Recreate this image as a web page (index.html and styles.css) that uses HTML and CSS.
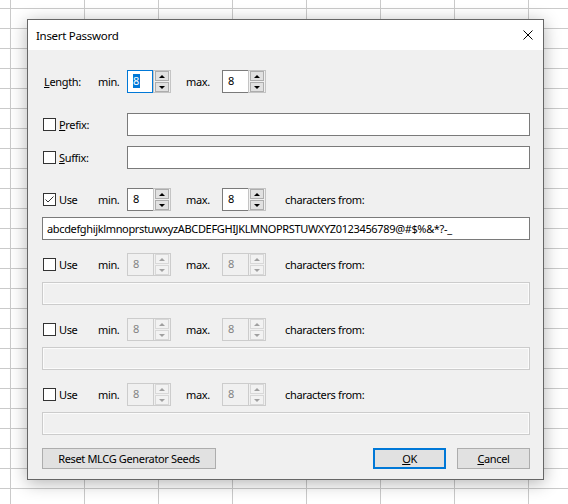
FILE: index.html
```html
<!DOCTYPE html>
<html lang="en">

<head>
  <meta charset="UTF-8">
  <title>Insert Password</title>
  <meta name="viewport" content="width=device-width, initial-scale=1.0">
  <link rel="stylesheet" href="styles.css">
</head>

<body>

  <div class="dialog">
    <div class="titlebar">
      <span class="title">Insert Password</span>
      <svg class="close" width="10" height="10" viewBox="0 0 10 10">
        <path d="M0.5 0.5L9.5 9.5M9.5 0.5L0.5 9.5" stroke="#000" stroke-width="1" fill="none" />
      </svg>
    </div>

    <div class="content">

      <!-- length -->
      <div class="row">
        <div class="lead"><span class="label length-label"><u>L</u>ength:</span></div>
        <span class="tag">min.</span>
        <div class="spin focused">
          <div class="spin-edit"><span class="sel">8</span></div>
          <div class="spin-btns"><span class="arrow-btn"><i class="up"></i></span><span class="arrow-btn"><i class="down"></i></span></div>
        </div>
        <span class="tag tag-max">max.</span>
        <div class="spin">
          <div class="spin-edit">8</div>
          <div class="spin-btns"><span class="arrow-btn"><i class="up"></i></span><span class="arrow-btn"><i class="down"></i></span></div>
        </div>
      </div>

      <!-- prefix / suffix -->
      <div class="affix">
        <div class="row">
          <div class="lead lead-wide"><span class="check"></span><span class="label"><u>P</u>refix:</span></div>
          <div class="field"></div>
        </div>
        <div class="row">
          <div class="lead lead-wide"><span class="check"></span><span class="label"><u>S</u>uffix:</span></div>
          <div class="field"></div>
        </div>
      </div>

      <!-- character sets -->
      <div class="set first">
        <div class="row">
          <div class="lead">
            <span class="check checked">
              <svg width="11" height="11" viewBox="0 0 11 11"><path d="M1.5 5.5L4 8L9.5 2.5" stroke="#333" stroke-width="1" fill="none" /></svg>
            </span>
            <span class="label">Use</span>
          </div>
          <span class="tag">min.</span>
          <div class="spin">
            <div class="spin-edit">8</div>
            <div class="spin-btns"><span class="arrow-btn"><i class="up"></i></span><span class="arrow-btn"><i class="down"></i></span></div>
          </div>
          <span class="tag tag-max">max.</span>
          <div class="spin">
            <div class="spin-edit">8</div>
            <div class="spin-btns"><span class="arrow-btn"><i class="up"></i></span><span class="arrow-btn"><i class="down"></i></span></div>
          </div>
          <span class="from">characters from:</span>
        </div>
        <div class="field">abcdefghijklmnoprstuwxyzABCDEFGHIJKLMNOPRSTUWXYZ0123456789@#$%&amp;*?-_</div>
      </div>

      <div class="set">
        <div class="row">
          <div class="lead"><span class="check"></span><span class="label">Use</span></div>
          <span class="tag">min.</span>
          <div class="spin disabled">
            <div class="spin-edit">8</div>
            <div class="spin-btns"><span class="arrow-btn"><i class="up"></i></span><span class="arrow-btn"><i class="down"></i></span></div>
          </div>
          <span class="tag tag-max">max.</span>
          <div class="spin disabled">
            <div class="spin-edit">8</div>
            <div class="spin-btns"><span class="arrow-btn"><i class="up"></i></span><span class="arrow-btn"><i class="down"></i></span></div>
          </div>
          <span class="from">characters from:</span>
        </div>
        <div class="field disabled"></div>
      </div>

      <div class="set">
        <div class="row">
          <div class="lead"><span class="check"></span><span class="label">Use</span></div>
          <span class="tag">min.</span>
          <div class="spin disabled">
            <div class="spin-edit">8</div>
            <div class="spin-btns"><span class="arrow-btn"><i class="up"></i></span><span class="arrow-btn"><i class="down"></i></span></div>
          </div>
          <span class="tag tag-max">max.</span>
          <div class="spin disabled">
            <div class="spin-edit">8</div>
            <div class="spin-btns"><span class="arrow-btn"><i class="up"></i></span><span class="arrow-btn"><i class="down"></i></span></div>
          </div>
          <span class="from">characters from:</span>
        </div>
        <div class="field disabled"></div>
      </div>

      <div class="set">
        <div class="row">
          <div class="lead"><span class="check"></span><span class="label">Use</span></div>
          <span class="tag">min.</span>
          <div class="spin disabled">
            <div class="spin-edit">8</div>
            <div class="spin-btns"><span class="arrow-btn"><i class="up"></i></span><span class="arrow-btn"><i class="down"></i></span></div>
          </div>
          <span class="tag tag-max">max.</span>
          <div class="spin disabled">
            <div class="spin-edit">8</div>
            <div class="spin-btns"><span class="arrow-btn"><i class="up"></i></span><span class="arrow-btn"><i class="down"></i></span></div>
          </div>
          <span class="from">characters from:</span>
        </div>
        <div class="field disabled"></div>
      </div>

      <!-- buttons -->
      <div class="footer">
        <button class="btn btn-reset">Reset MLCG Generator Seeds</button>
        <button class="btn btn-ok"><u>O</u>K</button>
        <button class="btn btn-cancel"><u>C</u>ancel</button>
      </div>

    </div>
  </div>

</body>

</html>
```

FILE: styles.css
```css
body {
  margin: 0;
  height: 504px;
  overflow: hidden;
  background-color: #fff;
  background-image: linear-gradient(#cacaca 1px, transparent 1px),
    linear-gradient(90deg, #cacaca 1px, transparent 1px);
  background-size: 74px 20px;
  background-position: 10px 8px;
  font-family: "Noto Sans", sans-serif;
  font-size: 11px;
  letter-spacing: -0.35px;
  color: #000;
}

.dialog {
  margin: 19px 0 0 27px;
  width: 517px;
  height: 461px;
  box-sizing: border-box;
  border: 1px solid #666;
  background: #f0f0f0;
  box-shadow: 0 3px 16px rgba(0, 0, 0, 0.3);
  display: flex;
  flex-direction: column;
}

.titlebar {
  height: 30px;
  background: #fff;
  display: flex;
  align-items: center;
  justify-content: space-between;
  padding: 0 10px 0 8px;
}

.title {
  font-size: 11.5px;
  letter-spacing: -0.3px;
}

.content {
  padding: 20px 13px 10px 14px;
  display: flex;
  flex-direction: column;
}

.row {
  display: flex;
  align-items: center;
  height: 23px;
}

.lead {
  width: 56px;
  display: flex;
  align-items: center;
}

.lead-wide {
  width: 85px;
}

.length-label {
  padding-left: 2px;
}

.tag {
  width: 29px;
}

.tag-max {
  width: 36px;
  padding-left: 15px;
}

.from {
  margin-left: 19px;
}

.affix {
  margin-top: 20px;
  display: flex;
  flex-direction: column;
  gap: 10px;
}

.set {
  margin-top: 13px;
  display: flex;
  flex-direction: column;
  gap: 6px;
}

.set.first {
  margin-top: 19px;
}

/* checkbox */
.check {
  width: 13px;
  height: 13px;
  box-sizing: border-box;
  border: 1px solid #333;
  background: #fff;
  margin: 0 3px 0 1px;
  display: flex;
}

/* text boxes */
.field {
  flex: 1;
  height: 23px;
  box-sizing: border-box;
  border: 1px solid #7a7a7a;
  background: #fff;
  padding: 0 4px;
  line-height: 21px;
  white-space: nowrap;
  overflow: hidden;
}

.field.disabled {
  flex: none;
  border-color: #ccc;
  background: #f0f0f0;
  box-shadow: inset 0 0 0 1px #fbfbfb;
}

/* spin edit */
.spin {
  display: flex;
  width: 44px;
  height: 23px;
}

.spin-edit {
  width: 26px;
  box-sizing: border-box;
  border: 1px solid #7a7a7a;
  border-right: none;
  background: #fff;
  padding: 2px 0 0 5px;
  line-height: 15px;
}

.spin.focused .spin-edit {
  border: 1px solid #0078d7;
}

.sel {
  display: inline-block;
  height: 14px;
  line-height: 14px;
  padding-right: 1px;
  background: #0078d7;
  color: #fff;
}

.spin-btns {
  width: 18px;
  box-sizing: border-box;
  border: 1px solid #c4c4c4;
  display: flex;
  flex-direction: column;
  gap: 1px;
  padding: 0 1px;
  background: #f0f0f0;
}

.arrow-btn {
  flex: 1;
  box-sizing: border-box;
  border: 1px solid #adadad;
  background: #e1e1e1;
  display: flex;
  align-items: center;
  justify-content: center;
}

.up,
.down {
  width: 0;
  height: 0;
  border-left: 3px solid transparent;
  border-right: 3px solid transparent;
}

.up {
  border-bottom: 3px solid #000;
}

.down {
  border-top: 3px solid #000;
}

.spin.disabled .spin-edit {
  border-color: #ccc;
  background: #f0f0f0;
  color: #838383;
}

.spin.disabled .spin-btns {
  border-color: #ccc;
}

.spin.disabled .arrow-btn {
  border-color: #d8d8d8;
  background: #f2f2f2;
}

.spin.disabled .up {
  border-bottom-color: #a0a0a0;
}

.spin.disabled .down {
  border-top-color: #a0a0a0;
}

/* buttons */
.footer {
  margin-top: 13px;
  display: flex;
  gap: 11px;
}

.btn {
  height: 21px;
  box-sizing: border-box;
  border: 1px solid #adadad;
  background: #e1e1e1;
  font-family: inherit;
  font-size: 11px;
  letter-spacing: -0.35px;
  color: #000;
  padding: 0;
  width: 73px;
}

.btn-reset {
  width: 174px;
  margin-right: auto;
}

.btn-ok {
  border: 2px solid #0078d7;
}
```
